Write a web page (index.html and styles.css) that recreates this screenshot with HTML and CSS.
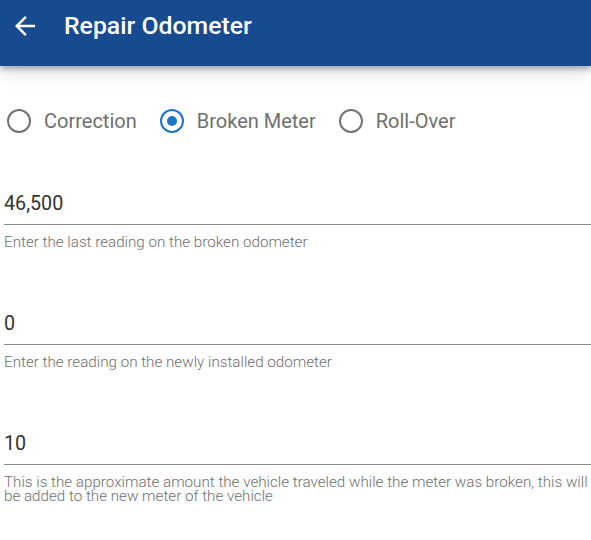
FILE: index.html
```html
<!DOCTYPE html>
<html>
<head>
<meta charset="utf-8">
<link rel="stylesheet" href="styles.css">
</head>
<body>
<header class="appbar">
  <svg class="back" width="30" height="30" viewBox="0 0 24 24"><path d="M20 11H7.83l5.59-5.59L12 4l-8 8 8 8 1.41-1.41L7.83 13H20v-2z" fill="#fff"/></svg>
  <h1 class="title">Repair Odometer</h1>
</header>
<main class="content">
  <div class="radios">
    <label class="radio"><span class="circle"></span><span class="rlabel">Correction</span></label>
    <label class="radio checked"><span class="circle"></span><span class="rlabel">Broken Meter</span></label>
    <label class="radio"><span class="circle"></span><span class="rlabel">Roll-Over</span></label>
  </div>
  <div class="field">
    <div class="value">46,500</div>
    <div class="helper">Enter the last reading on the broken odometer</div>
  </div>
  <div class="field">
    <div class="value">0</div>
    <div class="helper">Enter the reading on the newly installed odometer</div>
  </div>
  <div class="field">
    <div class="value">10</div>
    <div class="helper">This is the approximate amount the vehicle traveled while the meter was broken, this will be added to the new meter of the vehicle</div>
  </div>
</main>
</body>
</html>
```
FILE: styles.css
```css
html, body { margin: 0; padding: 0; background: #fff; }
body { font-family: Roboto, "Noto Sans", sans-serif; width: 591px; overflow: hidden; }
.appbar {
  height: 66px;
  background: #174a8f;
  display: flex;
  align-items: center;
  padding-left: 10px;
  box-shadow: 0 3px 6px rgba(0,0,0,0.3), 0 6px 20px rgba(0,0,0,0.12);
  position: relative;
  z-index: 1;
  box-sizing: border-box;
  padding-bottom: 14px;
}
.back { display: block; flex: none; }
.title {
  margin: 0 0 0 24px;
  color: #fff;
  font-size: 24.8px;
  font-weight: 500;
  line-height: 28px;
}
.content { padding: 0 0 0 4px; }
.radios {
  display: flex;
  align-items: center;
  height: 110px;
  box-sizing: border-box;
  margin-left: 3px;
}
.radio { display: flex; align-items: center; margin-right: 23px; }
.circle {
  width: 20px; height: 20px;
  border: 2px solid #737373;
  border-radius: 50%;
  box-sizing: content-box;
  position: relative;
  flex: none;
}
.checked .circle { border-color: #1e74c8; }
.checked .circle::after {
  content: "";
  position: absolute;
  left: 5px; top: 5px;
  width: 10px; height: 10px;
  border-radius: 50%;
  background: #1e74c8;
}
.rlabel { margin-left: 13px; font-size: 20px; color: #6f6f6f; }
.field { height: 120px; box-sizing: border-box; }
.value {
  font-size: 19.7px;
  color: #333;
  line-height: 24px;
  box-sizing: border-box;
  border-bottom: 1px solid #8a8a8a;
  height: 49px;
  padding-top: 16px;
}
.helper {
  font-size: 15.2px;
  font-weight: 300;
  color: #6f6f6f;
  line-height: 14px;
  padding-top: 10px;
}
```
